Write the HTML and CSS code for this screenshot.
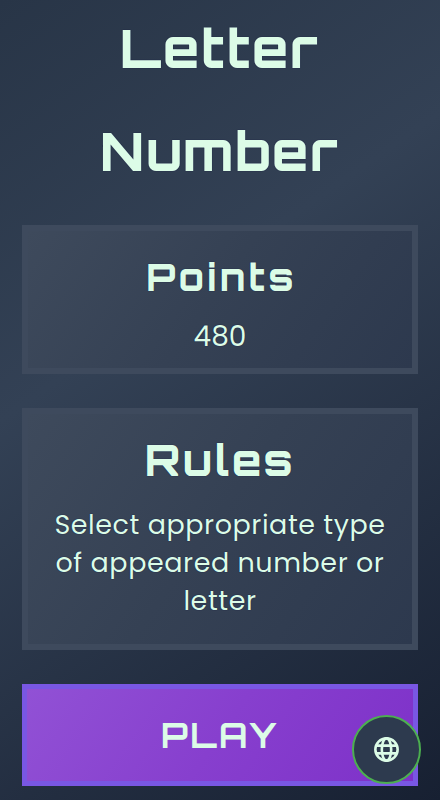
FILE: index.html
```
<!DOCTYPE html>
<html lang="en">
<head>
<meta charset="utf-8">
<title>Letter Number</title>
<link rel="stylesheet" href="styles.css">
</head>
<body>
<main class="page">
  <h1 class="title">Letter<br>Number</h1>
  <section class="card points">
    <h2 class="points-title">Points</h2>
    <p class="score">480</p>
  </section>
  <section class="card rules">
    <h2 class="rules-title">Rules</h2>
    <p class="copy">Select appropriate type<br>of appeared number or<br>letter</p>
  </section>
  <button class="play">PLAY</button>
</main>
<button class="language" aria-label="Language">
  <svg viewBox="0 0 24 24" width="25" height="25" fill="none" stroke="currentColor" stroke-width="2.5"><circle cx="12" cy="12" r="10.7"/><ellipse cx="12" cy="12" rx="4.5" ry="10.7"/><path d="M2 8.3h20M2 15.7h20"/></svg>
</button>
</body>
</html>
```
FILE: styles.css
```
* { box-sizing: border-box; margin: 0; padding: 0; }
body {
  height: 800px;
  overflow: hidden;
  color: #dcfce7;
  font-family: Poppins, Inter, sans-serif;
  background: linear-gradient(145deg, #283547 0%, #334155 38%, #172032 100%);
}
.page { display: flex; flex-direction: column; padding: 0 22px; }
h1, h2, .play {
  font-family: Orbitron, "DejaVu Sans", sans-serif;
  font-weight: 800;
  text-align: center;
  white-space: nowrap;
}
.title { height: 225px; margin-top: -4px; margin-bottom: 4px; padding-right: 1px; font-size: 53px; line-height: 103px; letter-spacing: 1.6px; text-shadow: 0 0 1px #000036; }
.card {
  border: 6px solid #3e4a5d;
  background: linear-gradient(125deg, #3e4a5c, #354154 48%, #2d394e);
  text-align: center;
  text-shadow: 0 0 1px #000036;
}
.points { height: 149px; padding-top: 20px; }
.points-title { font-size: 37px; line-height: 52px; letter-spacing: 3px; padding-left: 3px; }
.score { margin-top: 13px; font-size: 28px; line-height: 42px; }
.rules { height: 242px; margin-top: 34px; padding-top: 16px; }
.rules-title { font-size: 43px; line-height: 60px; letter-spacing: 2.3px; }
.copy { margin-top: 16px; font-size: 27px; line-height: 38px; letter-spacing: .55px; white-space: nowrap; }
.play {
  height: 102px;
  margin-top: 34px;
  border: 5px solid #7957e3;
  color: #dcfce7;
  background: linear-gradient(125deg, #9151d5, #873fce 50%, #7e31c9);
  font-size: 34px;
  font-weight: 700;
  letter-spacing: 2.4px;
}
.language {
  position: fixed;
  left: 352px;
  top: 715px;
  width: 69px;
  height: 69px;
  display: grid;
  place-items: center;
  border: 2px solid #4caf50;
  border-radius: 50%;
  color: #dcfce7;
  background: #2d3a4e;
}
```
